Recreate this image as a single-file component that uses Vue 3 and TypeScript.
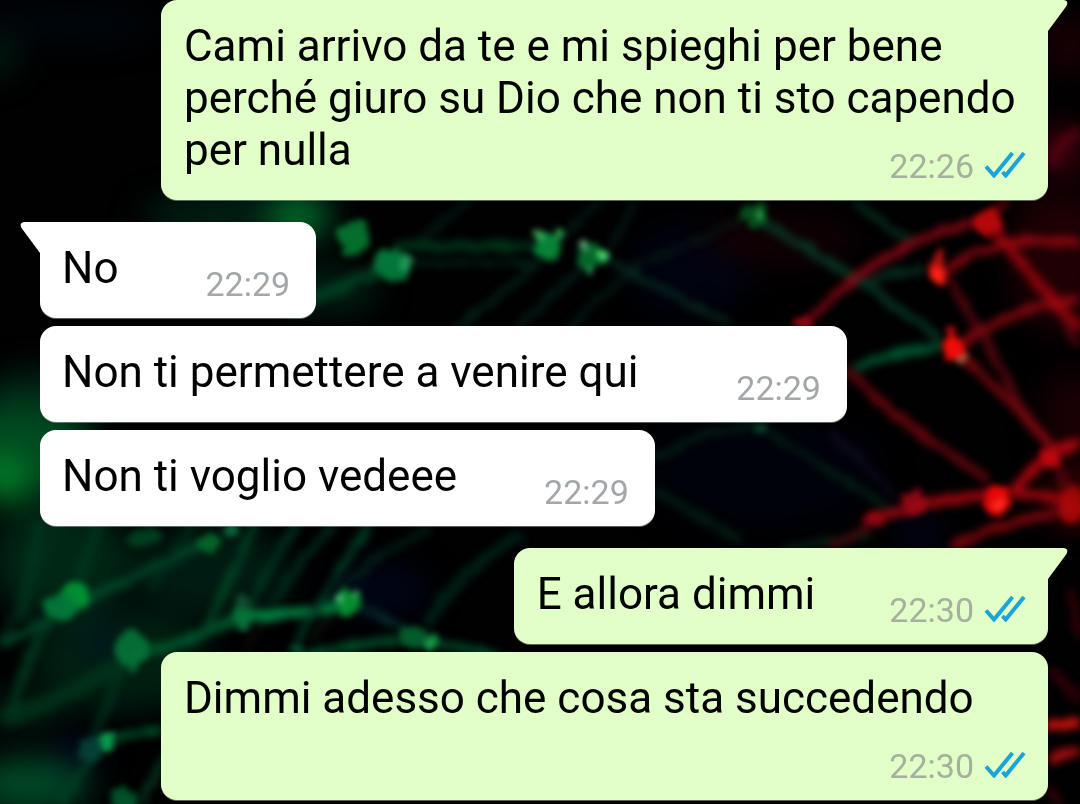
<script setup lang="ts">
interface Message {
  id: number
  text: string
  time: string
  outgoing: boolean
  first: boolean
}

interface Glow {
  x: number
  y: number
  rx: number
  ry: number
  color: string
  opacity: number
}

interface Strand {
  d: string
  color: string
  width: number
  opacity: number
}

const messages: Message[] = [
  { id: 1, text: 'Cami arrivo da te e mi spieghi per bene perché giuro su Dio che non ti sto capendo per nulla', time: '22:26', outgoing: true, first: true },
  { id: 2, text: 'No', time: '22:29', outgoing: false, first: true },
  { id: 3, text: 'Non ti permettere a venire qui\u00a0', time: '22:29', outgoing: false, first: false },
  { id: 4, text: 'Non ti voglio vedeee', time: '22:29', outgoing: false, first: false },
  { id: 5, text: 'E allora dimmi', time: '22:30', outgoing: true, first: true },
  { id: 6, text: 'Dimmi adesso che cosa sta succedendo', time: '22:30', outgoing: true, first: false },
]

const haze: Glow[] = [
  { x: 20, y: 450, rx: 70, ry: 46, color: '#00632a', opacity: 0.75 },
  { x: 4, y: 480, rx: 22, ry: 24, color: '#009a2c', opacity: 0.8 },
  { x: 40, y: 400, rx: 60, ry: 30, color: '#004a26', opacity: 0.5 },
  { x: 0, y: 55, rx: 14, ry: 22, color: '#003a1c', opacity: 0.6 },
  { x: 70, y: 24, rx: 90, ry: 18, color: '#000b14', opacity: 0.6 },
  { x: 240, y: 215, rx: 100, ry: 20, color: '#003a22', opacity: 0.6 },
  { x: 298, y: 216, rx: 30, ry: 26, color: '#007a30', opacity: 0.8 },
  { x: 330, y: 290, rx: 50, ry: 20, color: '#003a20', opacity: 0.6 },
  { x: 60, y: 560, rx: 70, ry: 60, color: '#00301a', opacity: 0.8 },
  { x: 120, y: 660, rx: 90, ry: 50, color: '#00361c', opacity: 0.6 },
  { x: 30, y: 785, rx: 60, ry: 28, color: '#005a2e', opacity: 0.8 },
  { x: 20, y: 710, rx: 50, ry: 14, color: '#003a1c', opacity: 0.6 },
  { x: 210, y: 570, rx: 80, ry: 46, color: '#00281a', opacity: 0.7 },
  { x: 100, y: 640, rx: 24, ry: 24, color: '#000a30', opacity: 0.4 },
  { x: 75, y: 755, rx: 26, ry: 16, color: '#001238', opacity: 0.5 },
  { x: 380, y: 590, rx: 50, ry: 26, color: '#000a26', opacity: 0.6 },
  { x: 690, y: 270, rx: 60, ry: 46, color: '#000414', opacity: 0.8 },
  { x: 760, y: 470, rx: 120, ry: 60, color: '#00030c', opacity: 0.8 },
  { x: 920, y: 530, rx: 24, ry: 18, color: '#070a38', opacity: 0.4 },
  { x: 780, y: 240, rx: 80, ry: 26, color: '#180004', opacity: 0.7 },
  { x: 1060, y: 260, rx: 50, ry: 70, color: '#2c0006', opacity: 0.7 },
  { x: 1072, y: 420, rx: 30, ry: 50, color: '#260006', opacity: 0.7 },
  { x: 1070, y: 45, rx: 26, ry: 30, color: '#260004', opacity: 0.7 },
  { x: 1062, y: 150, rx: 20, ry: 24, color: '#5c0010', opacity: 0.8 },
  { x: 1074, y: 500, rx: 24, ry: 22, color: '#8a0606', opacity: 0.7 },
]

const strands: Strand[] = [
  { d: 'M395 246H545', color: '#00401f', width: 10, opacity: 0.8 },
  { d: 'M395 263H530', color: '#063a24', width: 5, opacity: 0.6 },
  { d: 'M290 310Q340 285 385 270', color: '#004a28', width: 12, opacity: 0.7 },
  { d: 'M395 258Q440 225 470 200', color: '#04241a', width: 6, opacity: 0.7 },
  { d: 'M450 330Q500 300 545 255', color: '#06301c', width: 6, opacity: 0.8 },
  { d: 'M515 330Q545 300 590 260', color: '#08281e', width: 6, opacity: 0.8 },
  { d: 'M570 330Q600 290 640 270', color: '#06241a', width: 6, opacity: 0.7 },
  { d: 'M590 250Q660 290 730 325', color: '#0a3a28', width: 6, opacity: 0.8 },
  { d: 'M560 240L600 200M610 250L635 200', color: '#082420', width: 6, opacity: 0.7 },
  { d: 'M620 270Q690 245 740 220', color: '#0a2418', width: 6, opacity: 0.6 },
  { d: 'M755 218Q830 260 880 295T940 340', color: '#083c28', width: 8, opacity: 0.9 },
  { d: 'M855 200Q880 225 912 240', color: '#083a24', width: 7, opacity: 0.8 },
  { d: 'M860 285Q890 272 925 270', color: '#083224', width: 8, opacity: 0.9 },
  { d: 'M855 368Q890 350 945 347', color: '#005a32', width: 9, opacity: 0.95 },
  { d: 'M655 460L700 435L755 425Q830 470 900 515', color: '#063422', width: 6, opacity: 0.6 },
  { d: 'M655 490L740 540M780 550L870 535', color: '#052b1a', width: 7, opacity: 0.7 },
  { d: 'M830 430L900 500', color: '#141028', width: 6, opacity: 0.7 },
  { d: 'M0 645Q100 590 210 542', color: '#005830', width: 9, opacity: 0.7 },
  { d: 'M75 590L100 520M20 620L40 520', color: '#003c20', width: 12, opacity: 0.6 },
  { d: 'M10 715Q30 650 55 610', color: '#004424', width: 9, opacity: 0.7 },
  { d: 'M130 655Q190 645 240 615', color: '#006432', width: 10, opacity: 0.8 },
  { d: 'M240 617Q290 616 345 605', color: '#008442', width: 9, opacity: 1 },
  { d: 'M300 655Q360 645 410 638L500 655', color: '#006030', width: 8, opacity: 0.8 },
  { d: 'M350 602Q390 620 425 640', color: '#0a3a34', width: 6, opacity: 0.8 },
  { d: 'M200 640Q230 580 255 525', color: '#004c28', width: 8, opacity: 0.8 },
  { d: 'M250 610Q270 560 297 525', color: '#003c24', width: 7, opacity: 0.8 },
  { d: 'M270 605Q300 560 335 525', color: '#003624', width: 7, opacity: 0.8 },
  { d: 'M292 652Q330 580 370 525', color: '#00482c', width: 7, opacity: 0.85 },
  { d: 'M245 650L262 622M312 638L345 605', color: '#24301c', width: 3, opacity: 0.7 },
  { d: 'M340 590Q380 550 430 530', color: '#04281e', width: 6, opacity: 0.8 },
  { d: 'M425 625Q460 570 520 535', color: '#002c1e', width: 12, opacity: 0.7 },
  { d: 'M0 720Q70 700 130 655', color: '#003c1c', width: 18, opacity: 0.6 },
  { d: 'M90 745Q120 670 135 650', color: '#003c22', width: 9, opacity: 0.6 },
  { d: 'M105 742L162 728', color: '#006434', width: 8, opacity: 0.8 },
  { d: 'M60 804Q90 760 105 740M140 804L165 755', color: '#004424', width: 8, opacity: 0.7 },
  { d: 'M140 804L162 770', color: '#20301c', width: 3, opacity: 0.6 },
  { d: 'M0 640Q30 600 60 520', color: '#00301a', width: 12, opacity: 0.5 },
  { d: 'M150 590Q180 540 200 520', color: '#00341e', width: 10, opacity: 0.5 },
  { d: 'M800 330Q850 275 900 250T985 222', color: '#a80a18', width: 8, opacity: 0.75 },
  { d: 'M945 272Q1000 230 1080 243', color: '#a80a12', width: 9, opacity: 0.75 },
  { d: 'M988 220Q1020 265 1080 330', color: '#ac060e', width: 11, opacity: 0.75 },
  { d: 'M955 350Q1010 305 1080 300', color: '#a00a12', width: 10, opacity: 0.75 },
  { d: 'M945 272Q980 330 1010 385T1055 450', color: '#700a12', width: 8, opacity: 0.75 },
  { d: 'M952 350Q1010 395 1052 450', color: '#980a10', width: 8, opacity: 0.75 },
  { d: 'M845 368Q900 425 990 480', color: '#880810', width: 8, opacity: 0.75 },
  { d: 'M1015 488Q1050 450 1080 442', color: '#c80810', width: 10, opacity: 0.8 },
  { d: 'M865 522Q920 500 1000 494Q1040 488 1080 510', color: '#b80810', width: 10, opacity: 0.8 },
  { d: 'M950 546Q1010 520 1080 508', color: '#980810', width: 9, opacity: 0.8 },
  { d: 'M830 546L870 528', color: '#6a0612', width: 6, opacity: 0.7 },
  { d: 'M1062 320L1080 345M1052 455L1070 500', color: '#780610', width: 9, opacity: 0.6 },
  { d: 'M1048 726L1080 724', color: '#e81410', width: 11, opacity: 0.9 },
  { d: 'M1048 762Q1060 752 1080 752', color: '#b80e10', width: 10, opacity: 0.9 },
  { d: 'M1048 670Q1066 680 1080 704M1070 590L1080 640', color: '#500408', width: 8, opacity: 0.6 },
  { d: 'M1048 790L1062 804', color: '#500408', width: 7, opacity: 0.7 },
  { d: 'M1050 165Q1062 140 1080 130', color: '#600412', width: 12, opacity: 0.6 },
  { d: 'M985 222L1008 198', color: '#80060e', width: 7, opacity: 0.7 },
]

const nodes: Glow[] = [
  { x: 354, y: 237, rx: 17, ry: 16, color: '#04742e', opacity: 0.95 },
  { x: 391, y: 266, rx: 18, ry: 17, color: '#047a3a', opacity: 0.95 },
  { x: 406, y: 260, rx: 6, ry: 7, color: '#22a05c', opacity: 0.9 },
  { x: 547, y: 246, rx: 14, ry: 14, color: '#078a3a', opacity: 0.95 },
  { x: 538, y: 234, rx: 5, ry: 5, color: '#4ab060', opacity: 0.9 },
  { x: 560, y: 233, rx: 5, ry: 5, color: '#2da850', opacity: 0.9 },
  { x: 590, y: 256, rx: 15, ry: 12, color: '#06702e', opacity: 0.9 },
  { x: 603, y: 255, rx: 5, ry: 6, color: '#4ae070', opacity: 1 },
  { x: 584, y: 246, rx: 5, ry: 5, color: '#7ab894', opacity: 0.9 },
  { x: 591, y: 269, rx: 5, ry: 5, color: '#3aaa60', opacity: 0.8 },
  { x: 755, y: 215, rx: 14, ry: 12, color: '#06581e', opacity: 0.9 },
  { x: 759, y: 216, rx: 5, ry: 5, color: '#34b054', opacity: 0.9 },
  { x: 76, y: 594, rx: 14, ry: 12, color: '#009a34', opacity: 0.9 },
  { x: 60, y: 608, rx: 17, ry: 13, color: '#027c3c', opacity: 0.9 },
  { x: 210, y: 543, rx: 12, ry: 9, color: '#056a2a', opacity: 0.9 },
  { x: 231, y: 531, rx: 7, ry: 5, color: '#0a7c48', opacity: 0.8 },
  { x: 145, y: 537, rx: 17, ry: 11, color: '#004a26', opacity: 0.8 },
  { x: 242, y: 614, rx: 11, ry: 11, color: '#067438', opacity: 0.9 },
  { x: 243, y: 600, rx: 7, ry: 6, color: '#14583a', opacity: 0.8 },
  { x: 243, y: 629, rx: 5, ry: 5, color: '#1a7c4c', opacity: 0.8 },
  { x: 348, y: 602, rx: 13, ry: 13, color: '#059230', opacity: 0.95 },
  { x: 340, y: 599, rx: 4, ry: 7, color: '#68d090', opacity: 0.9 },
  { x: 354, y: 592, rx: 6, ry: 4, color: '#3aaa64', opacity: 0.8 },
  { x: 132, y: 651, rx: 17, ry: 19, color: '#047438', opacity: 0.9 },
  { x: 413, y: 637, rx: 13, ry: 10, color: '#04602e', opacity: 0.9 },
  { x: 432, y: 641, rx: 6, ry: 8, color: '#1aa44c', opacity: 0.9 },
  { x: 298, y: 650, rx: 8, ry: 5, color: '#0a7038', opacity: 0.8 },
  { x: 107, y: 741, rx: 9, ry: 10, color: '#0aa050', opacity: 0.95 },
  { x: 90, y: 750, rx: 13, ry: 12, color: '#05483c', opacity: 0.8 },
  { x: 125, y: 798, rx: 14, ry: 12, color: '#006434', opacity: 0.8 },
  { x: 761, y: 429, rx: 6, ry: 5, color: '#0c5034', opacity: 0.8 },
  { x: 987, y: 223, rx: 15, ry: 14, color: '#b8080c', opacity: 0.95 },
  { x: 938, y: 268, rx: 8, ry: 17, color: '#c01410', opacity: 0.9 },
  { x: 937, y: 276, rx: 5, ry: 7, color: '#ff2014', opacity: 1 },
  { x: 952, y: 348, rx: 11, ry: 12, color: '#f00c08', opacity: 1 },
  { x: 951, y: 333, rx: 5, ry: 6, color: '#d0100c', opacity: 0.9 },
  { x: 961, y: 360, rx: 5, ry: 4, color: '#aa7a4a', opacity: 0.8 },
  { x: 803, y: 322, rx: 9, ry: 6, color: '#b4081c', opacity: 0.8 },
  { x: 998, y: 501, rx: 14, ry: 14, color: '#e80808', opacity: 1 },
  { x: 1001, y: 505, rx: 6, ry: 6, color: '#ff3020', opacity: 1 },
  { x: 914, y: 503, rx: 11, ry: 13, color: '#a00816', opacity: 0.85 },
  { x: 875, y: 519, rx: 9, ry: 6, color: '#9a0816', opacity: 0.7 },
  { x: 1050, y: 458, rx: 10, ry: 9, color: '#d00810', opacity: 0.8 },
  { x: 1072, y: 505, rx: 13, ry: 19, color: '#b00808', opacity: 0.8 },
]
</script>

<template>
  <main class="chat">
    <svg class="wallpaper" viewBox="0 0 1080 804" preserveAspectRatio="xMidYMid slice" aria-hidden="true">
      <defs>
        <filter id="haze" x="-100" y="-100" width="1280" height="1004" filterUnits="userSpaceOnUse" color-interpolation-filters="sRGB">
          <feGaussianBlur stdDeviation="16" />
        </filter>
        <filter id="strand" x="-100" y="-100" width="1280" height="1004" filterUnits="userSpaceOnUse" color-interpolation-filters="sRGB">
          <feTurbulence type="fractalNoise" baseFrequency="0.06" numOctaves="2" seed="4" result="noise" />
          <feDisplacementMap in="SourceGraphic" in2="noise" scale="9" xChannelSelector="R" yChannelSelector="G" />
          <feGaussianBlur stdDeviation="4" />
        </filter>
        <filter id="node" x="-100" y="-100" width="1280" height="1004" filterUnits="userSpaceOnUse" color-interpolation-filters="sRGB">
          <feTurbulence type="fractalNoise" baseFrequency="0.08" numOctaves="2" seed="7" result="noise" />
          <feDisplacementMap in="SourceGraphic" in2="noise" scale="14" xChannelSelector="R" yChannelSelector="G" />
          <feGaussianBlur stdDeviation="3" />
        </filter>
      </defs>
      <rect width="1080" height="804" fill="#010102" />
      <g filter="url(#haze)">
        <ellipse v-for="(g, i) in haze" :key="i" :cx="g.x" :cy="g.y" :rx="g.rx" :ry="g.ry" :fill="g.color" :opacity="g.opacity" />
      </g>
      <g filter="url(#strand)" fill="none">
        <path v-for="(s, i) in strands" :key="i" :d="s.d" :stroke="s.color" :stroke-width="s.width" :opacity="s.opacity" />
      </g>
      <g filter="url(#node)">
        <ellipse v-for="(g, i) in nodes" :key="i" :cx="g.x" :cy="g.y" :rx="g.rx" :ry="g.ry" :fill="g.color" :opacity="g.opacity" />
      </g>
    </svg>

    <ol class="messages">
      <li
        v-for="m in messages"
        :key="m.id"
        class="message"
        :class="{ outgoing: m.outgoing, first: m.first }"
      >
        <svg v-if="m.first" class="tail" viewBox="0 0 21 32" aria-hidden="true">
          <path d="M0 0H17Q22 1 19.500 6L1 31V32H0Z" />
        </svg>
        <span class="text">{{ m.text }}</span>
        <span class="meta">
          <time>{{ m.time }}</time>
          <svg v-if="m.outgoing" class="ticks" viewBox="0 0 42 28" role="img" aria-label="Letto">
            <path d="M2 16.500L10 25.500L28.500 3M18.500 22L21.700 25.500L40 3" />
          </svg>
        </span>
      </li>
    </ol>
  </main>
</template>

<style>
body {
  margin: 0;
  background: #010102;
}
</style>

<style scoped>
.chat {
  position: relative;
  min-height: 100vh;
  overflow: hidden;
  font-family: Roboto, "Liberation Sans", sans-serif;
}

.wallpaper {
  position: absolute;
  inset: 0;
  width: 100%;
  height: 100%;
}

.messages {
  position: relative;
  display: flex;
  flex-direction: column;
  align-items: flex-start;
  gap: 8px;
  margin: 0;
  padding: 0 32px 0 40px;
  list-style: none;
}

.message {
  position: relative;
  display: flow-root;
  box-sizing: border-box;
  max-width: 88%;
  padding: 20px 26px 24px 22px;
  border-radius: 16px;
  background: #fff;
  color: #000;
  font-size: 44px;
  line-height: 52px;
  box-shadow: 0 1px 0 rgba(150, 165, 150, 0.6);
}

.message.outgoing {
  align-self: flex-end;
  padding-right: 22px;
  padding-left: 23px;
  background: #e1ffc7;
}

.message.first:not(:first-child) {
  margin-top: 14px;
}

.message.first {
  border-top-left-radius: 0;
}

.message.outgoing.first {
  border-top-left-radius: 16px;
  border-top-right-radius: 0;
}

.tail {
  position: absolute;
  top: 0;
  right: calc(100% - 1px);
  width: 21px;
  height: 32px;
  fill: #fff;
  transform: scaleX(-1);
}

.outgoing .tail {
  right: auto;
  left: calc(100% - 1px);
  fill: #e1ffc7;
  transform: none;
}

.meta {
  float: right;
  display: flex;
  align-items: center;
  gap: 10px;
  margin: 22px 0 -10px 87px;
  color: #a3a7aa;
  font-size: 34px;
  line-height: 40px;
}

.outgoing .meta {
  margin-left: 74px;
  color: #a5b09e;
}

.ticks {
  width: 42px;
  height: 28px;
  margin-bottom: 4px;
  fill: none;
  stroke: #1ba4dc;
  stroke-width: 4;
}
</style>
